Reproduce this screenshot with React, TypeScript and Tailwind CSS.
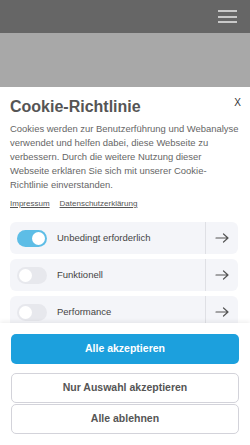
import React from "react";

const Arrow = () => (
  <svg width="14" height="10" viewBox="0 0 14 10" fill="none" stroke="#555" strokeWidth="1.2" strokeLinecap="round" strokeLinejoin="round">
    <path d="M1 5h12M8.5 1l4.5 4-4.5 4" />
  </svg>
);

const Row = ({ label, on }: { label: string; on?: boolean }) => (
  <div className="flex h-[32px] shrink-0 items-center rounded-[6px] bg-[#f4f5f9]">
    <div
      className={
        "ml-[7px] flex h-[17px] w-[30px] items-center rounded-full px-[2px] " +
        (on ? "justify-end bg-[#5dbde6]" : "justify-start bg-[#e7e8ed]")
      }
    >
      <div className="h-[13px] w-[13px] rounded-full bg-white" />
    </div>
    <span className="ml-[10px] flex-1 text-[9.5px] text-[#444]">{label}</span>
    <div className="flex h-full w-[33px] items-center justify-center border-l border-[#dfe0e5]">
      <Arrow />
    </div>
  </div>
);

export default function App() {
  return (
    <div
      className="flex h-[445px] w-[250px] flex-col overflow-hidden"
      style={{ fontFamily: '"Liberation Sans", Arial, sans-serif' }}
    >
      <div className="flex h-[33px] shrink-0 items-center justify-end bg-[#666666] pr-[13px]">
        <div className="flex w-[19px] flex-col gap-[3.5px]">
          <div className="h-[2px] bg-[#c9c9c9]" />
          <div className="h-[2px] bg-[#c9c9c9]" />
          <div className="h-[2px] bg-[#c9c9c9]" />
        </div>
      </div>
      <div className="h-[54px] shrink-0 bg-[#a8a8a8]" />
      <div className="relative flex min-h-0 flex-1 flex-col bg-white">
        <div className="flex min-h-0 flex-1 flex-col overflow-hidden pl-[10px] pr-[12px] pt-[10px]">
          <div className="flex items-start justify-between">
            <h1 className="text-[16px] font-bold leading-[20px] text-[#555]">Cookie-Richtlinie</h1>
            <span className="mr-[-3px] mt-[-1px] text-[10px] leading-[14px] text-[#333]">X</span>
          </div>
          <p className="mr-[-4px] mt-[5px] text-[9.45px] leading-[14px] text-[#666]">
            Cookies werden zur Benutzerführung und Webanalyse verwendet und helfen dabei, diese Webseite zu
            verbessern. Durch die weitere Nutzung dieser Webseite erklären Sie sich mit unserer Cookie-Richtlinie
            einverstanden.
          </p>
          <div className="mt-[6px] flex gap-[10px] text-[8px] leading-[12px] text-[#555]">
            <span className="underline">Impressum</span>
            <span className="underline">Datenschutzerklärung</span>
          </div>
          <div className="mt-[12px] flex flex-col gap-[5px]">
            <Row label="Unbedingt erforderlich" on />
            <Row label="Funktionell" />
            <Row label="Performance" />
          </div>
        </div>
        <div className="absolute bottom-0 left-0 right-0 flex h-[122px] flex-col bg-white px-[11px] pt-[11px] shadow-[0_-2px_4px_rgba(0,0,0,0.06)]">
          <button className="h-[30px] rounded-[5px] bg-[#1ca0dd] text-[10.5px] font-bold text-white">
            Alle akzeptieren
          </button>
          <button className="mt-[9px] h-[30px] rounded-[5px] border border-[#d3d3da] bg-white text-[10.5px] font-bold text-[#555]">
            Nur Auswahl akzeptieren
          </button>
          <button className="mt-[1px] h-[30px] rounded-[5px] border border-[#d3d3da] bg-white text-[10.5px] font-bold text-[#555]">
            Alle ablehnen
          </button>
        </div>
      </div>
    </div>
  );
}
